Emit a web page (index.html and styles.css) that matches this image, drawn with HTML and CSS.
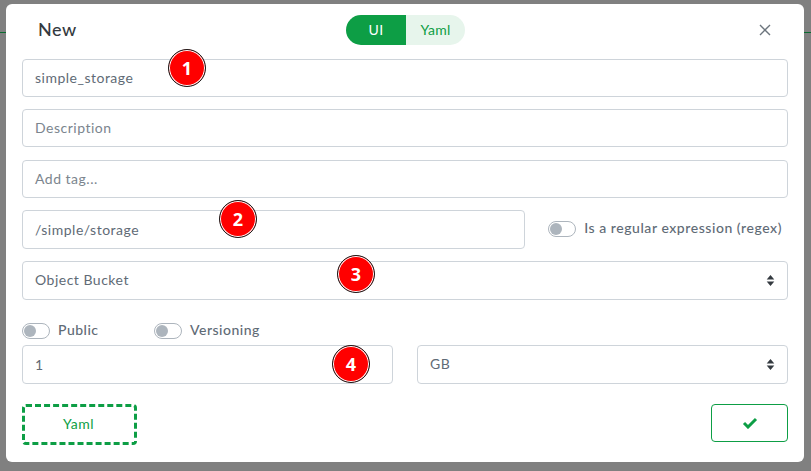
FILE: index.html
```html
<!DOCTYPE html>
<html lang="en">
<head>
<meta charset="utf-8">
<title>New</title>
<link rel="stylesheet" href="styles.css">
</head>
<body>
<div class="backdrop">
  <div class="bg-line bg-line-left"></div>
  <div class="bg-line bg-line-right"></div>
  <div class="modal">
    <header class="modal-header">
      <h1 class="title">New</h1>
      <div class="switch-tabs">
        <span class="tab tab-active">UI</span>
        <span class="tab tab-idle">Yaml</span>
      </div>
      <svg class="close" viewBox="0 0 12 12" width="12" height="12"><path d="M1 1l10 10M11 1L1 11" stroke="#6c757d" stroke-width="1.4" fill="none"/></svg>
    </header>
    <div class="form">
      <div class="field f-name"><span class="val">simple_storage</span><span class="badge b1">1</span></div>
      <div class="field f-ph"><span class="val">Description</span></div>
      <div class="field f-ph"><span class="val">Add tag...</span></div>
      <div class="row row-path">
        <div class="field f-path"><span class="val val-low">/simple/storage</span><span class="badge b2">2</span></div>
        <label class="toggle toggle-regex"><span class="knob"></span><span class="val val-regex">Is a regular expression (regex)</span></label>
      </div>
      <div class="field f-select"><span class="val">Object Bucket</span>
        <svg class="caret" viewBox="0 0 8 12" width="9" height="13"><path d="M4 1l3.5 4h-7zM4 11L.5 7h7z" fill="#343a40"/></svg>
        <span class="badge b3">3</span>
      </div>
      <div class="row row-toggles">
        <label class="toggle toggle-public"><span class="knob"></span><span class="val">Public</span></label>
        <label class="toggle"><span class="knob"></span><span class="val">Versioning</span></label>
      </div>
      <div class="row row-size">
        <div class="field f-size"><span class="val val-low">1</span><span class="badge b4">4</span></div>
        <div class="field f-unit"><span class="val">GB</span>
          <svg class="caret" viewBox="0 0 8 12" width="9" height="13"><path d="M4 1l3.5 4h-7zM4 11L.5 7h7z" fill="#343a40"/></svg>
        </div>
      </div>
      <div class="row row-actions">
        <div class="btn-yaml"><span class="val val-yaml">Yaml</span></div>
        <div class="btn-ok"><svg viewBox="0 0 16 12" width="16" height="12"><path d="M2 6l4 4 8-8" stroke="#0d9e45" stroke-width="3" fill="none"/></svg></div>
      </div>
    </div>
  </div>
</div>
</body>
</html>
```
FILE: styles.css
```css
* { box-sizing: border-box; }
html, body { margin: 0; height: 100%; }
body { font-family: "Lato", "Open Sans", sans-serif; color: #5c6773; overflow: hidden; }
.backdrop { position: relative; width: 811px; height: 471px; background: #808080; padding: 4px 7px 9px 6px; }
.bg-line { position: absolute; top: 32px; height: 1px; background: #0a6b30; }
.bg-line-left { left: 0; width: 6px; }
.bg-line-right { right: 0; width: 7px; }
.modal { position: relative; height: 458px; background: #fff; border-radius: 6px; padding: 0 10px 0 16px; }
.modal-header { height: 55px; display: flex; align-items: center; position: relative; padding-left: 16px; }
.title { margin: 0; font-size: 18px; font-weight: 500; color: #343a40; letter-spacing: .5px; position: relative; top: -3px; }
.switch-tabs { position: absolute; left: 324px; top: 11px; display: flex; width: 119px; height: 30px; font-size: 14px; letter-spacing: .3px; border-radius: 15px; overflow: hidden; }
.tab { flex: 0 0 60px; display: flex; align-items: center; justify-content: center; padding-bottom: 1px; font-weight: 300; }
.tab-active { background: #0d9e45; color: #fff; font-weight: 400; }
.tab-idle { flex: 1; background: #e7f5ec; color: #0d9e45; font-weight: 400; }
.close { position: absolute; left: 737px; top: 20px; }
.form { display: flex; flex-direction: column; width: 766px; }
.val { position: relative; top: -1px; letter-spacing: .5px; }
.val-low { top: 0; }
.val-regex { letter-spacing: .55px; top: -1px; }
.val-yaml { left: -1px; }
.field { position: relative; height: 38px; border: 1px solid #ced4da; border-radius: 4px; padding: 0 12px; display: flex; align-items: center; font-size: 14px; color: #5f6b76; background: #fff; flex: none; }
.f-ph { color: #7b858e; margin-top: 12px; }
.f-ph + .f-ph { margin-top: 13px; }
.row { display: flex; align-items: center; }
.row-path { margin-top: 12px; justify-content: space-between; }
.f-path { width: 503px; height: 39px; }
.f-select { margin-top: 12px; height: 39px; }
.caret { position: absolute; right: 12px; top: 12px; }
.toggle { display: inline-flex; align-items: center; font-size: 14px; font-weight: 500; color: #5f6b76; gap: 8px; }
.toggle-regex { margin-right: 6px; position: relative; top: -1px; }
.knob { position: relative; display: block; width: 28px; height: 16px; border: 1px solid #adb5bd; border-radius: 8px; background: #fff; }
.knob::after { content: ""; position: absolute; left: 1px; top: 1px; width: 12px; height: 12px; border-radius: 50%; background: #adb5bd; }
.row-toggles { margin-top: 22px; height: 17px; }
.toggle-public { width: 132px; }
.row-size { margin-top: 6px; justify-content: space-between; }
.f-size { width: 371px; height: 39px; }
.f-unit { width: 371px; height: 39px; }
.row-actions { margin-top: 20px; justify-content: space-between; align-items: flex-start; }
.btn-yaml { width: 115px; height: 41px; border: 3px dashed #0d9e45; border-radius: 4px; display: flex; align-items: center; justify-content: center; color: #0d9e45; font-size: 14px; }
.btn-ok { width: 77px; height: 38px; border: 1px solid #0d9e45; border-radius: 4px; display: flex; align-items: center; justify-content: center; }
.badge { position: absolute; width: 38px; height: 38px; border-radius: 50%; background: #f00; border: 1px solid #1a1a1a; box-shadow: inset 0 0 0 1px #fff; color: #fff; font-weight: 700; font-size: 18px; display: flex; align-items: center; justify-content: center; font-family: "Open Sans", sans-serif; }
.b1 { left: 145px; top: -11px; }
.b2 { left: 196px; top: -11px; }
.b3 { left: 314px; top: -7px; }
.b4 { left: 309px; top: -1px; }
```
